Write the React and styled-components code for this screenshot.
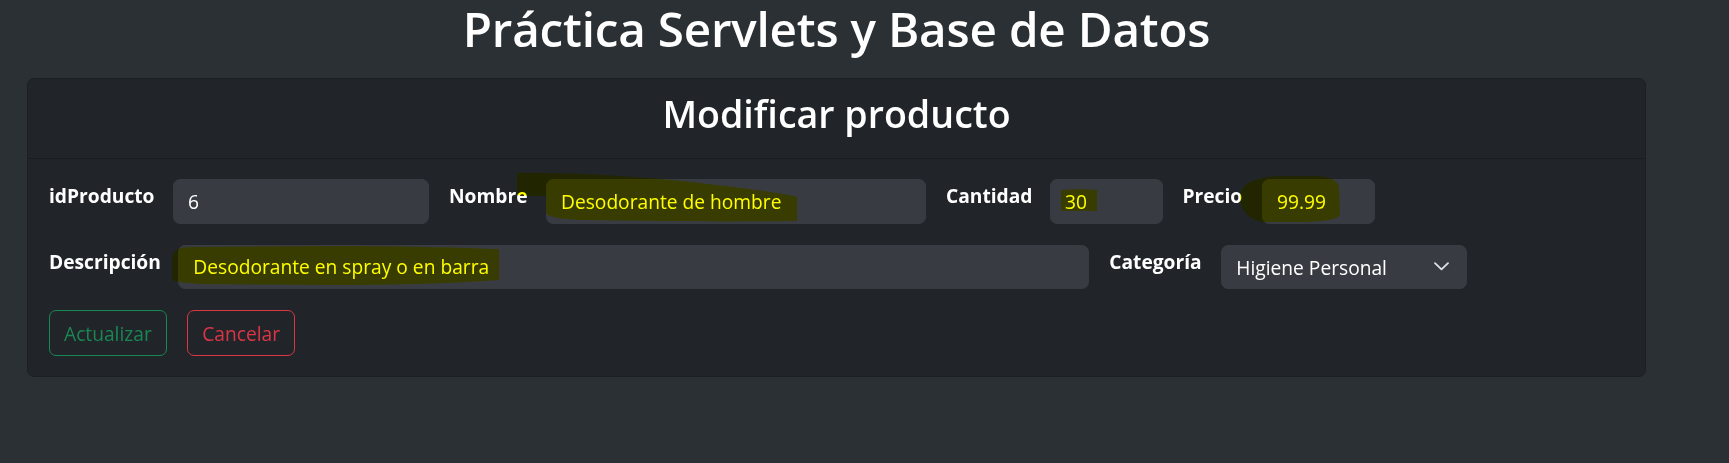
import React from "react";
import styled, { createGlobalStyle } from "styled-components";

const GlobalStyle = createGlobalStyle`
  html, body {
    margin: 0;
    padding: 0;
    background: #2b3035;
  }
  body {
    font-family: "Open Sans", "Noto Sans", "Liberation Sans", sans-serif;
    color: #fff;
  }
  * { box-sizing: border-box; }
`;

const Page = styled.div`
  position: relative;
  width: 1729px;
  min-height: 463px;
  padding-left: 27px;
`;

const Container = styled.div`
  width: 1619px;
`;

const Title = styled.h1`
  margin: 0 0 20px;
  text-align: center;
  font-size: 47.6px;
  font-weight: 600;
  line-height: 58px;
  letter-spacing: -0.2px;
  color: #fff;
`;

const Card = styled.section`
  background: #212529;
  border: 1px solid #1c1f23;
  border-radius: 7px;
`;

const CardHeader = styled.h2`
  margin: 0;
  height: 80px;
  padding-top: 11.5px;
  border-bottom: 1px solid #1a1d20;
  text-align: center;
  font-size: 37.6px;
  font-weight: 600;
  line-height: 46px;
  color: #fff;
`;

const CardBody = styled.form`
  display: flex;
  flex-direction: column;
  gap: 21px;
  padding: 20px 21px 20px 21px;
`;

const FieldRow = styled.div`
  display: flex;
  align-items: flex-start;
  gap: 20px;
`;

const Label = styled.label`
  flex: 0 0 ${(p) => p.$w}px;
  min-width: 0;
  width: ${(p) => p.$w}px;
  padding-top: 4px;
  font-size: 19.2px;
  font-weight: 700;
  line-height: 26px;
  white-space: nowrap;
  overflow: visible;
  color: #fff;
`;

const TextInput = styled.input`
  flex: 0 0 ${(p) => p.$w}px;
  min-width: 0;
  width: ${(p) => p.$w}px;
  height: 44.5px;
  padding: 0 14px;
  border: 1px solid #383c42;
  border-radius: 7px;
  background: #383c42;
  color: #fff;
  font-family: inherit;
  font-size: 19.2px;
  outline: none;
`;

const SelectBox = styled.div`
  flex: 0 0 ${(p) => p.$w}px;
  min-width: 0;
  height: 44.5px;
  display: flex;
  align-items: center;
  justify-content: space-between;
  padding: 1px 17px 0 14px;
  border: 1px solid #383c42;
  border-radius: 7px;
  background: #383c42;
  color: #fff;
  font-size: 19.2px;
`;

const Chevron = styled.svg`
  display: block;
  margin-top: -2px;
`;

const ButtonRow = styled.div`
  display: flex;
  gap: 20.5px;
`;

const OutlineButton = styled.button`
  height: 46.3px;
  padding: 0 14px;
  border: 1px solid ${(p) => p.$color};
  border-radius: 7px;
  background: transparent;
  color: ${(p) => p.$color};
  font-family: inherit;
  font-size: 19.2px;
  line-height: 1;
  cursor: pointer;
`;

const HighlightLayer = styled.svg`
  position: absolute;
  top: 0;
  left: 0;
  pointer-events: none;
  mix-blend-mode: multiply;
`;

const highlights = [
  "M517,173 C560,172 640,176 700,183 C750,189 785,193 797,197 L797,221 C740,222 640,221 580,220 C560,219 549,217 546,213 L546,196 C535,196 524,196 517,195 Z",
  "M1061,190 L1080,189 L1097,190 L1097,211 L1061,211 Z",
  "M1240,197 C1240,184 1254,177 1280,176 L1318,176 C1331,177 1338,181 1339,187 L1340,214 C1338,219 1330,221 1305,222 L1263,222 C1249,220 1240,210 1240,197 Z",
  "M172,258 C173,251 178,247 192,247 L330,246 C410,246 470,248 490,249 L499,249 L499,280 C460,283 400,285 330,285 L200,284 C186,283 177,282 172,280 Z",
];

export default function App() {
  return (
    <>
      <GlobalStyle />
      <Page>
        <Container>
          <Title>Práctica Servlets y Base de Datos</Title>
          <Card>
            <CardHeader>Modificar producto</CardHeader>
            <CardBody onSubmit={(e) => e.preventDefault()}>
              <FieldRow>
                <Label $w={104} htmlFor="id">idProducto</Label>
                <TextInput $w={256} id="id" defaultValue="6" />
                <Label $w={77} htmlFor="nombre">Nombre</Label>
                <TextInput $w={380} id="nombre" defaultValue="Desodorante de hombre" />
                <Label $w={84} htmlFor="cantidad">Cantidad</Label>
                <TextInput $w={112.5} id="cantidad" defaultValue="30" />
                <Label $w={59.5} htmlFor="precio">Precio</Label>
                <TextInput $w={112.5} id="precio" defaultValue="99.99" />
              </FieldRow>
              <FieldRow>
                <Label $w={109.3} htmlFor="desc">Descripción</Label>
                <TextInput $w={911} id="desc" defaultValue="Desodorante en spray o en barra" />
                <Label $w={92}>Categoría</Label>
                <SelectBox $w={245.4} role="combobox">
                  <span>Higiene Personal</span>
                  <Chevron width="15" height="9" viewBox="0 0 15 9">
                    <path d="M1 1.2 L7.5 7.4 L14 1.2" fill="none" stroke="#dee2e6" strokeWidth="1.8" strokeLinecap="round" strokeLinejoin="round" />
                  </Chevron>
                </SelectBox>
              </FieldRow>
              <ButtonRow>
                <OutlineButton $color="#198754" type="submit">Actualizar</OutlineButton>
                <OutlineButton $color="#dc3545" type="button">Cancelar</OutlineButton>
              </ButtonRow>
            </CardBody>
          </Card>
        </Container>
        <HighlightLayer width="1729" height="463" viewBox="0 0 1729 463">
          {highlights.map((d, i) => (
            <path key={i} d={d} fill="#ffff00" />
          ))}
        </HighlightLayer>
      </Page>
    </>
  );
}
